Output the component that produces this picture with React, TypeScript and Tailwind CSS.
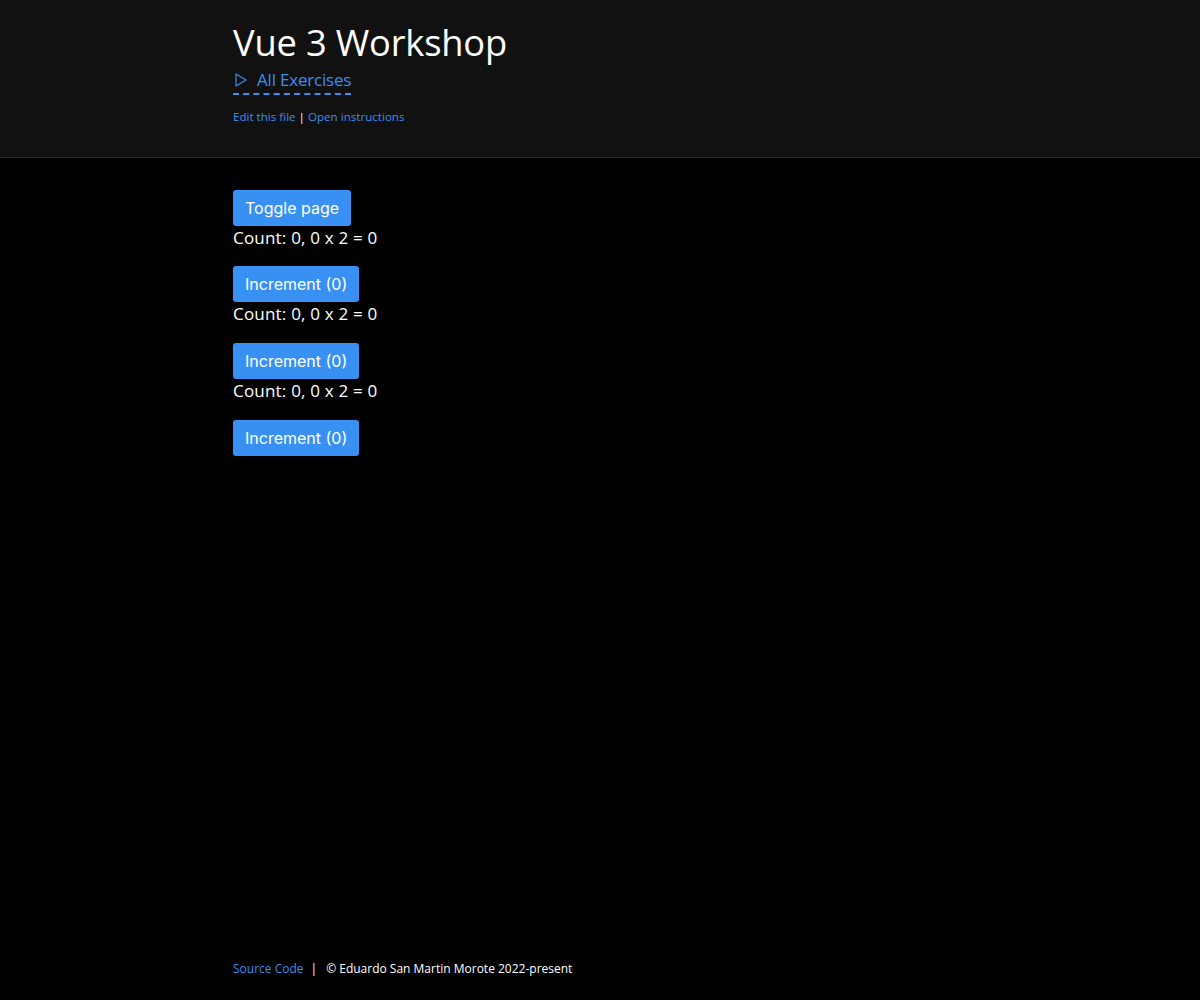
import React from "react";

export default function App() {
  const font = { fontFamily: '"Open Sans", "Noto Sans", sans-serif' };
  const btn =
    "h-9 px-3 rounded-[3px] bg-[#3891f2] text-white text-[16px] font-['Inter',sans-serif] leading-9";
  return (
    <div className="min-h-[1000px] h-[1000px] flex flex-col bg-black text-white" style={font}>
      <header className="bg-[#111111] border-b border-[#2a2a2a] h-[158px]">
        <div className="mx-auto w-[734px] pt-[18px]">
          <h1 className="text-[36.3px] leading-[48px] text-white tracking-[-0.2px]">Vue 3 Workshop</h1>
          <div className="mt-[2px]">
            <a className="inline-flex items-center text-[17px] leading-[24px] text-[#3a8ef0] border-b-2 border-dashed border-[#3a8ef0] pb-[1px]">
              <svg width="12" height="14" viewBox="0 0 12 14" className="ml-[2px] mr-[10px]">
                <path d="M1 1 L11 7 L1 13 Z" fill="none" stroke="#3a8ef0" strokeWidth="1.2" strokeLinejoin="round" />
              </svg>
              <span className="tracking-[-0.2px]">All Exercises</span>
            </a>
          </div>
          <div className="mt-[14px] text-[11.6px] leading-[16px]">
            <a className="text-[#3a8ef0]">Edit this file</a>
            <span className="text-white"> | </span>
            <a className="text-[#3a8ef0]">Open instructions</a>
          </div>
        </div>
      </header>
      <main className="mx-auto w-[734px] pt-[32px] flex-1">
        <div className="flex flex-col items-start">
          <button className={btn}>Toggle page</button>
          <div className="text-[17px] leading-[24px] tracking-[0.2px]">Count: 0, 0 x 2 = 0</div>
          <button className={btn + " mt-[16px]"}>Increment (0)</button>
          <div className="text-[17px] leading-[24px] tracking-[0.2px]">Count: 0, 0 x 2 = 0</div>
          <button className={btn + " mt-[17px]"}>Increment (0)</button>
          <div className="text-[17px] leading-[24px] tracking-[0.2px]">Count: 0, 0 x 2 = 0</div>
          <button className={btn + " mt-[17px]"}>Increment (0)</button>
        </div>
      </main>
      <footer className="mx-auto w-[734px] pb-[23px] text-[12px] leading-[16px]">
        <a className="text-[#3a8ef0]">Source Code</a>
        <span className="text-white ml-[7px] mr-[9px]">|</span>
        <span className="text-white">© Eduardo San Martin Morote 2022-present</span>
      </footer>
    </div>
  );
}
